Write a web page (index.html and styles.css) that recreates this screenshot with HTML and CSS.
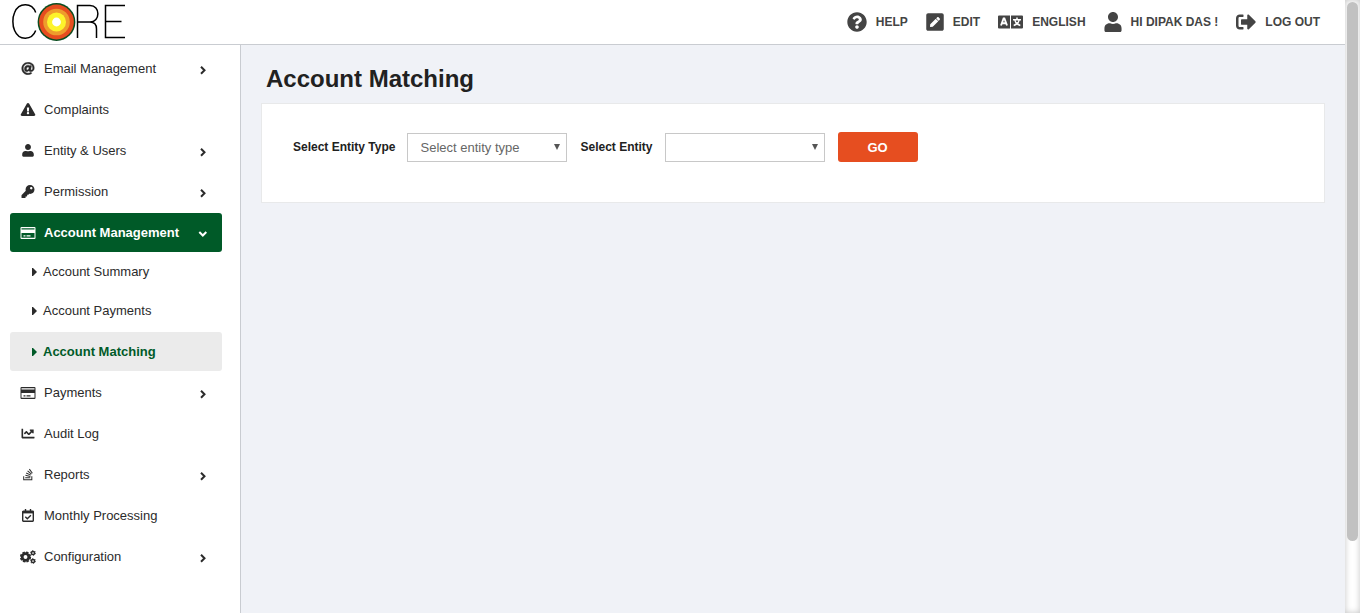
FILE: index.html
```html
<!DOCTYPE html>
<html lang="en">
<head>
<meta charset="utf-8">
<meta name="viewport" content="width=device-width, initial-scale=1">
<title>Account Matching</title>
<link rel="stylesheet" href="styles.css">
</head>
<body>
<svg class="sprite" aria-hidden="true">
  <symbol id="card" viewBox="0 0 15 12"><path fill-rule="evenodd" d="M1 0h13a1 1 0 0 1 1 1v10a1 1 0 0 1-1 1H1a1 1 0 0 1-1-1V1a1 1 0 0 1 1-1zM1 1.200v1.300h13V1.200zM1 6v4.800h13V6zM3 8.200h2v1.300H3zM6 8.200h4v1.300H6z"/></symbol>
  <symbol id="user" viewBox="0 0 448 512"><path d="M224 256c70.700 0 128-57.300 128-128S294.700 0 224 0 96 57.300 96 128s57.300 128 128 128zm89.600 32h-16.700c-22.200 10.200-46.900 16-72.900 16s-50.600-5.800-72.900-16h-16.700C60.200 288 0 348.200 0 422.400V464c0 26.500 21.500 48 48 48h352c26.500 0 48-21.500 48-48v-41.600c0-74.200-60.200-134.400-134.400-134.400z"/></symbol>
  <symbol id="chevron" viewBox="0 0 10 10"><path d="M3 1.700 6.500 5.200 3 8.700" fill="none" stroke="currentColor" stroke-width="2"/></symbol>
  <symbol id="caret" viewBox="0 0 5 8"><path d="M0 0h1l4 4-4 4H0z"/></symbol>
</svg>
<div class="shell">
  <div class="app">
    <header class="topbar">
      <a class="brand" href="#" aria-label="Core home">
        <svg class="logo" viewBox="0 0 116 44" aria-hidden="true">
          <g fill="none" stroke="#000" stroke-width="1.500">
            <path d="M25.700 12.500C22 2.500 9 2 4.600 12.500c-2.300 5-2.300 13 0 18C9 41 22 40.500 25.700 30.500"/>
            <path d="M67.500 38V5.500H80c10.500 0 10.500 16.500 0 16.500H67.500M80 22c5.500 0 6.500 3 6.500 7v9M115 5.500H95.500v32H115M95.500 21.500h16"/>
          </g>
          <circle cx="46.500" cy="22" r="18.900" fill="#0a4d20"/>
          <circle cx="46.500" cy="22" r="17.400" fill="#e64d1f"/>
          <circle cx="46.500" cy="22" r="13.300" fill="#ee9c2c"/>
          <circle cx="46.500" cy="22" r="9.500" fill="#fdf32b"/>
          <circle cx="46.500" cy="22" r="4.400" fill="#fff"/>
        </svg>
      </a>
      <nav class="actions" aria-label="User">
        <a href="#"><svg class="i20" viewBox="0 0 512 512"><path d="M504 256c0 136.997-111.043 248-248 248S8 392.997 8 256C8 119.083 119.043 8 256 8s248 111.083 248 248zM262.655 90c-54.497 0-89.255 22.957-116.549 63.758-3.536 5.286-2.353 12.415 2.715 16.258l34.699 26.310c5.205 3.947 12.621 3.008 16.665-2.122 17.864-22.658 30.113-35.797 57.303-35.797 20.429 0 45.698 13.148 45.698 32.958 0 14.976-12.363 22.667-32.534 33.976C247.128 238.528 216 254.941 216 296v4c0 6.627 5.373 12 12 12h56c6.627 0 12-5.373 12-12v-1.333c0-28.462 83.186-29.647 83.186-106.667 0-58.002-60.165-102-116.531-102zM256 338c-25.365 0-46 20.635-46 46 0 25.364 20.635 46 46 46s46-20.636 46-46c0-25.365-20.635-46-46-46z"/></svg>HELP</a>
        <a href="#"><svg class="i18" viewBox="0 0 448 512"><path d="M400 480H48c-26.500 0-48-21.500-48-48V80c0-26.500 21.500-48 48-48h352c26.500 0 48 21.500 48 48v352c0 26.500-21.500 48-48 48zM238.100 177.900L102.400 313.600l-6.300 57.100c-.8 7.600 5.600 14.100 13.300 13.300l57.100-6.300L302.200 242c2.300-2.300 2.300-6.100 0-8.500L246.700 178c-2.500-2.400-6.300-2.400-8.600-.1zM345 165.100L314.900 135c-9.400-9.400-24.600-9.400-33.900 0l-23.100 23.100c-2.300 2.300-2.300 6.100 0 8.500l55.500 55.500c2.300 2.300 6.100 2.300 8.500 0L345 199c9.300-9.300 9.300-24.500 0-33.900z"/></svg>EDIT</a>
        <a href="#"><svg class="i25" viewBox="0 0 25 20"><path d="M1 3.500h11v13H1a1 1 0 0 1-1-1v-11a1 1 0 0 1 1-1zM13 3.500h11a1 1 0 0 1 1 1v11a1 1 0 0 1-1 1H13z"/><g fill="none" stroke="#fff" stroke-width="1.900"><path d="m3 13.500 2.600-7h.8l2.600 7M4 11.300h4"/><path d="M15 7.800h8M19 5.500v2M16.800 8c.4 2.500 3 4.700 5.500 5.500M21.200 8c-.4 2.500-3 4.700-5.500 5.500" stroke-width="1.500"/></g></svg>ENGLISH</a>
        <a href="#"><svg class="i18" viewBox="0 0 448 512"><use href="#user"/></svg>HI DIPAK DAS !</a>
        <a href="#"><svg class="i20" viewBox="0 0 512 512"><path d="M497 273L329 441c-15 15-41 4.500-41-17v-96H152c-13.300 0-24-10.700-24-24v-96c0-13.300 10.700-24 24-24h136V88c0-21.400 25.900-32 41-17l168 168c9.300 9.400 9.300 24.600 0 34zM192 436v-40c0-6.600-5.400-12-12-12H96c-17.700 0-32-14.300-32-32V160c0-17.700 14.300-32 32-32h84c6.600 0 12-5.400 12-12V76c0-6.600-5.400-12-12-12H96c-53 0-96 43-96 96v192c0 53 43 96 96 96h84c6.600 0 12-5.400 12-12z"/></svg>LOG OUT</a>
      </nav>
    </header>
    <div class="body">
      <nav class="sidebar" aria-label="Main">
        <ul class="menu">
          <li><a class="item" href="#"><svg class="icon small" viewBox="0 0 512 512"><path stroke="currentColor" stroke-width="14" d="M256 8C118.941 8 8 118.919 8 256c0 137.059 110.919 248 248 248 48.154 0 95.342-14.140 135.408-40.223 12.005-7.815 14.625-24.288 5.552-35.372l-10.177-12.433c-7.671-9.371-21.179-11.667-31.373-5.129C325.920 429.757 291.314 440 256 440c-101.458 0-184-82.542-184-184S154.542 72 256 72c100.139 0 184 57.619 184 160 0 38.786-21.093 79.742-58.170 83.693-17.349-.454-16.910-12.857-13.476-30.024l23.433-121.110C394.653 149.750 383.308 136 368.225 136h-44.981a13.518 13.518 0 0 0-13.432 11.993l-.01.092c-14.697-17.901-40.448-21.775-59.971-21.775-74.580 0-137.831 62.234-137.831 151.460 0 65.303 36.785 105.870 96 105.870 26.984 0 57.369-15.637 74.991-38.333 9.522 34.104 40.613 34.103 70.710 34.103C462.609 379.410 504 307.798 504 232 504 95.653 394.023 8 256 8zm-21.680 304.430c-22.249 0-36.070-15.623-36.070-40.771 0-44.993 30.779-72.729 58.630-72.729 22.292 0 35.601 15.241 35.601 40.770 0 45.061-33.875 72.730-58.161 72.730z"/></svg><span class="text">Email Management</span><svg class="chev"><use href="#chevron"/></svg></a></li>
          <li><a class="item" href="#"><svg class="icon small" viewBox="0 0 576 512"><path d="M569.517 440.013C587.975 472.007 564.806 512 527.940 512H48.054c-36.937 0-59.999-40.055-41.577-71.987L246.423 23.985c18.467-32.009 64.720-31.951 83.154 0l239.940 416.028zM288 354c-25.405 0-46 20.595-46 46s20.595 46 46 46 46-20.595 46-46-20.595-46-46-46zm-43.673-165.346l7.418 136c.347 6.364 5.609 11.346 11.982 11.346h48.546c6.373 0 11.635-4.982 11.982-11.346l7.418-136c.375-6.874-5.098-12.654-11.982-12.654h-63.383c-6.884 0-12.356 5.780-11.981 12.654z"/></svg><span class="text">Complaints</span></a></li>
          <li><a class="item" href="#"><svg class="icon small" viewBox="0 0 448 512" preserveAspectRatio="xMidYMid meet"><path d="M224 240c66 0 116-54 116-120S290 0 224 0 108 54 108 120s50 120 116 120zm100 32h-27c-22 10-47 16-73 16s-51-6-73-16h-27C44 272-4 330-4 400v56c0 26 20 46 46 46h364c26 0 46-20 46-46v-56c0-70-54-128-128-128z"/></svg><span class="text">Entity &amp; Users</span><svg class="chev"><use href="#chevron"/></svg></a></li>
          <li><a class="item" href="#"><svg class="icon small" viewBox="0 0 512 512"><path d="M512 176.001C512 273.203 433.202 352 336 352c-11.220 0-22.190-1.062-32.827-3.069l-24.012 27.014A23.999 23.999 0 0 1 261.223 384H224v40c0 13.255-10.745 24-24 24h-40v40c0 13.255-10.745 24-24 24H24c-13.255 0-24-10.745-24-24v-78.059c0-6.365 2.529-12.470 7.029-16.971l161.802-161.802C163.108 213.814 160 195.271 160 176 160 78.798 238.797.001 335.999 0 433.488-.001 512 78.511 512 176.001zM336 128c0 26.510 21.490 48 48 48s48-21.490 48-48-21.490-48-48-48-48 21.490-48 48z"/></svg><span class="text">Permission</span><svg class="chev"><use href="#chevron"/></svg></a></li>
          <li>
            <a class="item open" href="#" aria-expanded="true"><svg class="icon card"><use href="#card"/></svg><span class="text">Account Management</span><svg class="chev"><use href="#chevron"/></svg></a>
            <ul class="submenu">
              <li><a class="subitem" href="#"><svg class="caret"><use href="#caret"/></svg>Account Summary</a></li>
              <li><a class="subitem" href="#"><svg class="caret"><use href="#caret"/></svg>Account Payments</a></li>
              <li class="current"><a class="subitem" href="#" aria-current="page"><svg class="caret"><use href="#caret"/></svg>Account Matching</a></li>
            </ul>
          </li>
          <li><a class="item" href="#"><svg class="icon card"><use href="#card"/></svg><span class="text">Payments</span><svg class="chev"><use href="#chevron"/></svg></a></li>
          <li><a class="item" href="#"><svg class="icon small" viewBox="0 0 512 512"><path d="M496 384H64V80c0-8.840-7.160-16-16-16H16C7.160 64 0 71.160 0 80v336c0 17.670 14.330 32 32 32h464c8.840 0 16-7.160 16-16v-32c0-8.840-7.160-16-16-16zM464 96H345.940c-21.380 0-32.090 25.850-16.970 40.970l32.400 32.400L288 242.750l-73.370-73.370c-12.500-12.500-32.760-12.500-45.250 0l-68.690 68.690c-6.250 6.250-6.250 16.380 0 22.630l22.620 22.620c6.250 6.250 16.380 6.250 22.630 0L192 237.250l73.370 73.370c12.500 12.500 32.760 12.500 45.250 0l96-96 32.400 32.400c15.120 15.120 40.970 4.410 40.970-16.970V112c.01-8.840-7.150-16-15.990-16z"/></svg><span class="text">Audit Log</span></a></li>
          <li><a class="item" href="#"><svg class="icon small" viewBox="0 0 384 512"><path d="M290.700 311L95 269.700 86.800 309l195.700 41zm51-87L188.200 95.700l-25.500 30.800 153.500 128.300zm-31.200 39.700L129.200 179l-16.700 36.500L293.700 300zM262 32l-32 24 119.300 160.300 32-24zm20.500 328h-200v39.700h200zm39.700 80H42.700V320h-40v160h359.500V320h-40z"/></svg><span class="text">Reports</span><svg class="chev"><use href="#chevron"/></svg></a></li>
          <li><a class="item" href="#"><svg class="icon small" viewBox="0 0 12 13"><g fill="none" stroke="currentColor" stroke-width="1.400"><rect x=".7" y="2.200" width="10.600" height="10" rx=".6"/><path d="M3.500 0v2M8.500 0v2M3.300 7.800l2 2 3.600-3.600"/></g><path d="M.5 2h11v2.400H.5z"/></svg><span class="text">Monthly Processing</span></a></li>
          <li><a class="item" href="#"><svg class="icon" viewBox="0 0 16 14"><g fill="none" stroke="currentColor"><circle cx="5.500" cy="7" r="3.300" stroke-width="2.700"/><circle cx="5.500" cy="7" r="4.800" stroke-width="1.600" stroke-dasharray="2.500 1.270"/><circle cx="13" cy="3" r="1.600" stroke-width="1.500"/><circle cx="13" cy="3" r="2.500" stroke-width=".8" stroke-dasharray="1.300 1.318"/><circle cx="13" cy="11" r="1.600" stroke-width="1.500"/><circle cx="13" cy="11" r="2.500" stroke-width=".8" stroke-dasharray="1.300 1.318"/></g></svg><span class="text">Configuration</span><svg class="chev"><use href="#chevron"/></svg></a></li>
        </ul>
      </nav>
      <main class="main">
        <h1>Account Matching</h1>
        <form class="panel">
          <div class="field">
            <label for="type">Select Entity Type</label>
            <div class="select"><select id="type"><option>Select entity type</option></select><svg viewBox="0 0 6 6" aria-hidden="true"><path d="M0 0h6L3 6z"/></svg></div>
          </div>
          <div class="field">
            <label for="entity">Select Entity</label>
            <div class="select"><select id="entity"><option></option></select><svg viewBox="0 0 6 6" aria-hidden="true"><path d="M0 0h6L3 6z"/></svg></div>
          </div>
          <button class="go" type="button">GO</button>
        </form>
      </main>
    </div>
  </div>
  <div class="scroll" aria-hidden="true"><div class="thumb"></div></div>
</div>
</body>
</html>
```
FILE: styles.css
```css
* { box-sizing: border-box; }
body {
  margin: 0;
  font-family: "Liberation Sans", Arial, sans-serif;
  font-size: 13px;
  color: #2b2b2b;
  background: #f0f2f7;
}
a { color: inherit; text-decoration: none; }
ul { list-style: none; margin: 0; padding: 0; }
svg { display: block; flex: none; fill: currentColor; }
.sprite { display: none; }

.shell { display: flex; min-height: 100vh; }
.app { flex: 1; min-width: 0; display: flex; flex-direction: column; }

.topbar {
  display: flex;
  align-items: center;
  justify-content: space-between;
  height: 45px;
  padding: 0 25px 0 10px;
  background: #fff;
  border-bottom: 1px solid #c9ccd1;
}
.logo { width: 116px; height: 44px; }
.actions { display: flex; gap: 18px; padding-bottom: 1px; }
.actions a {
  display: flex;
  align-items: center;
  gap: 9px;
  font-size: 12px;
  font-weight: bold;
  color: #444;
  white-space: nowrap;
}
.i20 { width: 20px; height: 20px; }
.i18 { width: 18px; height: 20px; }
.i25 { width: 25px; height: 20px; }

.body { flex: 1; display: flex; }
.sidebar {
  flex: none;
  width: 241px;
  padding: 4px 18px 0 10px;
  background: #fff;
  border-right: 1px solid #c9ccd1;
}
.menu { display: flex; flex-direction: column; gap: 2px; }
.item, .subitem {
  display: flex;
  align-items: center;
  height: 39px;
  border-radius: 3px;
}
.item { gap: 8px; padding: 0 14px 0 10px; }
.icon { width: 16px; height: 14px; }
.icon.small { height: 13px; }
.icon.card { height: 12px; }
.text { flex: 1; }
.chev { width: 10px; height: 10px; margin-top: 3px; }
.open { background: #005a28; color: #fff; font-weight: bold; }
.open .chev { transform: rotate(90deg); }
.subitem { gap: 6px; padding-left: 22px; }
.caret { width: 5px; height: 8px; }
.current { margin-top: 2px; }
.current .subitem { background: #ebebeb; color: #005a28; font-weight: bold; }

.main { flex: 1; min-width: 0; padding: 20px; }
h1 {
  margin: 0 0 10px;
  padding-left: 5px;
  font-size: 24px;
  line-height: 28px;
  color: #212121;
}
.panel {
  display: flex;
  flex-wrap: wrap;
  align-items: center;
  gap: 13px;
  padding: 28px 31px 40px;
  background: #fff;
  border: 1px solid #e8e9ea;
}
.field { display: flex; align-items: center; gap: 12px; }
label { font-size: 12px; font-weight: bold; color: #212121; }
.select { position: relative; width: 160px; }
select {
  display: block;
  appearance: none;
  width: 100%;
  height: 29px;
  padding: 0 24px 0 12px;
  border: 1px solid #c8c8c8;
  border-radius: 0;
  background: #fff;
  color: #666;
  font: inherit;
}
.select svg {
  position: absolute;
  top: 11px;
  right: 7px;
  width: 6px;
  height: 6px;
  color: #555;
  pointer-events: none;
}
.go {
  width: 80px;
  height: 30px;
  border: 0;
  border-radius: 3px;
  background: #e64e20;
  color: #fff;
  font: bold 13px "Liberation Sans", Arial, sans-serif;
}

.scroll {
  flex: none;
  width: 15px;
  padding: 2px;
  background: #fff;
  box-shadow: inset 0 0 6px #c4c4c4;
}
.thumb { width: 11px; height: 88vh; border-radius: 6px; background: #c1c1c1; }
```
